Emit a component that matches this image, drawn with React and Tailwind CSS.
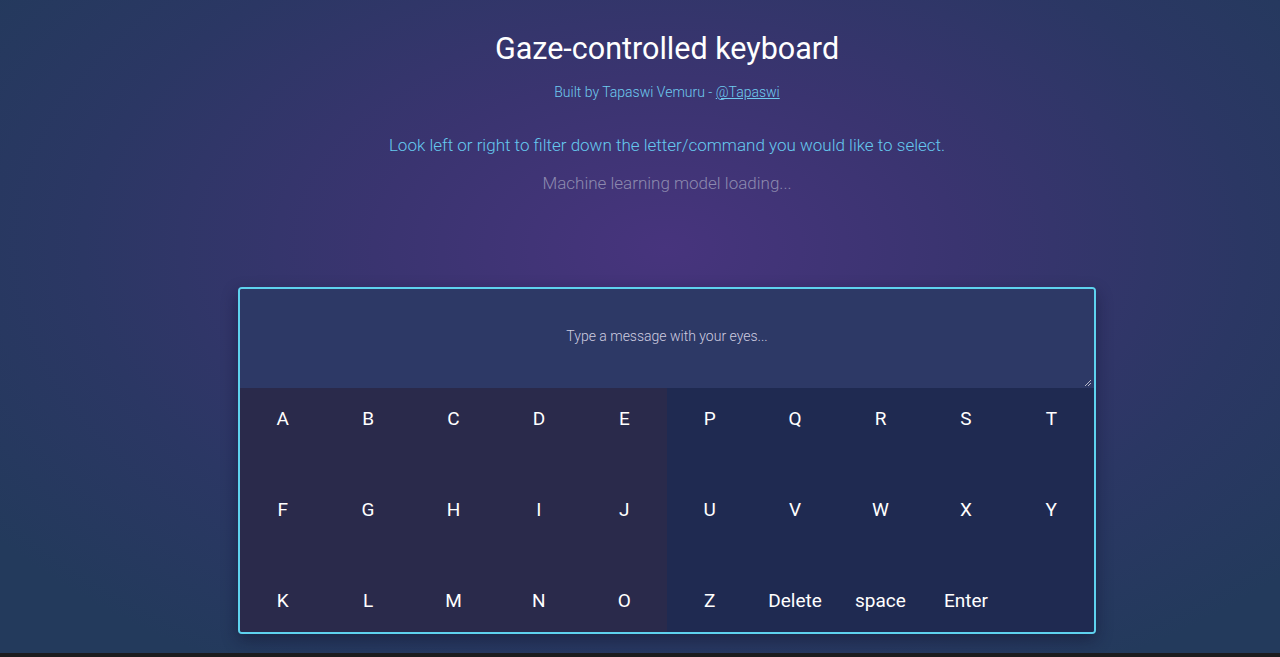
const leftRows = [
  ['A', 'B', 'C', 'D', 'E'],
  ['F', 'G', 'H', 'I', 'J'],
  ['K', 'L', 'M', 'N', 'O'],
]

const rightRows = [
  ['P', 'Q', 'R', 'S', 'T'],
  ['U', 'V', 'W', 'X', 'Y'],
  ['Z', 'Delete', 'space', 'Enter', ''],
]

const Key = ({ label }) => (
  <div className="h-[91px] flex justify-center pt-[17px] text-[19px] leading-[28px] text-white">
    {label}
  </div>
)

const App = () => {
  return (
    <div className="h-[657px] w-full flex flex-col overflow-hidden font-['Roboto',sans-serif]">
      <div className="flex-1 flex flex-col items-center pl-[54px] bg-[radial-gradient(ellipse_65%_75%_at_52%_38%,#47347d_0%,#3a3470_35%,#2b3764_70%,#233a5c_100%)]">
        <h1 className="mt-[29px] text-[30.5px] leading-[40px] text-white">Gaze-controlled keyboard</h1>
        <p className="mt-[14px] text-[14px] leading-[18px] font-light text-[#6fcbef]">
          Built by Tapaswi Vemuru - <span className="underline">@Tapaswi</span>
        </p>
        <p className="mt-[33px] text-[17px] leading-[22px] font-light text-[#66c9ef]">
          Look left or right to filter down the letter/command you would like to select.
        </p>
        <p className="mt-[16px] text-[17px] leading-[22px] font-light text-[#8d8aaf]">
          Machine learning model loading...
        </p>

        <div className="mt-[93px] w-[858px] h-[347px] border-2 border-[#5ed2ee] rounded-[4px] overflow-hidden flex flex-col shadow-[0_6px_16px_rgba(15,15,40,0.45)]">
          <div className="relative h-[99px] shrink-0 bg-[#2d3966] flex items-center justify-center pb-[4px]">
            <span className="text-[14px] font-light text-[#cfcde0]">Type a message with your eyes...</span>
            <svg className="absolute right-[2px] bottom-[1px]" width="8" height="8" viewBox="0 0 8 8">
              <path d="M7 1 L1 7 M7 4 L4 7" stroke="#b8b8c8" strokeWidth="1" />
            </svg>
          </div>
          <div className="flex-1 grid grid-cols-2">
            <div className="bg-[#2a2a4b] grid grid-cols-5 content-start">
              {leftRows.flat().map((k, i) => (
                <Key key={i} label={k} />
              ))}
            </div>
            <div className="bg-[#1f2a51] grid grid-cols-5 content-start">
              {rightRows.flat().map((k, i) => (
                <Key key={i} label={k} />
              ))}
            </div>
          </div>
        </div>
      </div>
      <div className="h-[4px] bg-[#1c1c1e]" />
    </div>
  )
}

export default App
